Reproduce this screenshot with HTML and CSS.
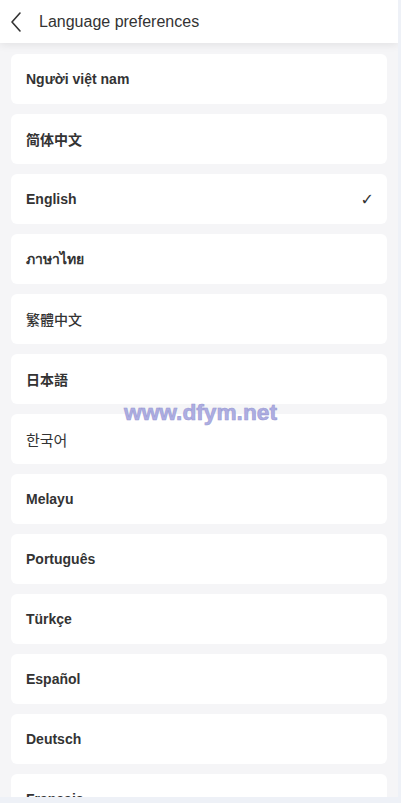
FILE: index.html
```html
<!DOCTYPE html>
<html lang="en">
<head>
    <meta charset="UTF-8">
    <meta name="viewport" content="width=device-width, initial-scale=1.0">
    <title>Language preferences</title>
    <link rel="stylesheet" href="styles.css">
</head>
<body>
    <div class="app">
        <header class="topbar">
            <svg class="back" width="14" height="22" viewBox="0 0 14 22">
                <path d="M11 2 L3 11 L11 20" fill="none" stroke="#333" stroke-width="1.6" stroke-linecap="round" stroke-linejoin="round"/>
            </svg>
            <span class="title">Language preferences</span>
        </header>

        <ul class="lang-list">
            <li class="lang">Người việt nam</li>
            <li class="lang">简体中文</li>
            <li class="lang active">English <span class="check">✓</span></li>
            <li class="lang">ภาษาไทย</li>
            <li class="lang light">繁體中文</li>
            <li class="lang">日本語</li>
            <li class="lang regular">한국어</li>
            <li class="lang">Melayu</li>
            <li class="lang">Português</li>
            <li class="lang">Türkçe</li>
            <li class="lang">Español</li>
            <li class="lang">Deutsch</li>
            <li class="lang">Français</li>
        </ul>

        <div class="mark">www.dfym.net</div>
    </div>
</body>
</html>
```

FILE: styles.css
```css
body {
    margin: 0;
    background: #eef1f7;
    font-family: "Liberation Sans", Arial, "Noto Sans CJK SC", sans-serif;
    color: #333;
}
.app {
    position: relative;
    width: 398px;
    height: 797px;
    overflow: hidden;
    background: #f5f5f7;
}
.topbar {
    position: relative;
    z-index: 1;
    height: 43px;
    display: flex;
    align-items: center;
    background: #fff;
    box-shadow: 0 2px 8px rgba(0,0,0,0.08);
}
.back {
    margin-left: 9px;
    margin-right: 16px;
}
.title {
    font-size: 16px;
    color: #333;
}
.lang-list {
    list-style: none;
    margin: 0;
    padding: 11px 11px 0;
    display: flex;
    flex-direction: column;
    gap: 10px;
}
.lang {
    height: 50px;
    display: flex;
    align-items: center;
    justify-content: space-between;
    padding: 0 13px 0 15px;
    background: #fff;
    border-radius: 6px;
    font-size: 14px;
    font-weight: bold;
    color: #333;
}
.lang.light {
    font-weight: 500;
}
.lang.regular {
    font-weight: normal;
    font-size: 15px;
    font-family: "Liberation Sans", "Noto Sans CJK KR", sans-serif;
}
.check {
    font-weight: normal;
    font-size: 16px;
    font-family: "DejaVu Sans", sans-serif;
}
.mark {
    position: absolute;
    left: 124px;
    top: 399px;
    font-size: 22.7px;
    font-weight: bold;
    color: #a6a6e0;
    -webkit-text-stroke: 0.6px #8f8fcf;
    opacity: 0.9;
}
```
